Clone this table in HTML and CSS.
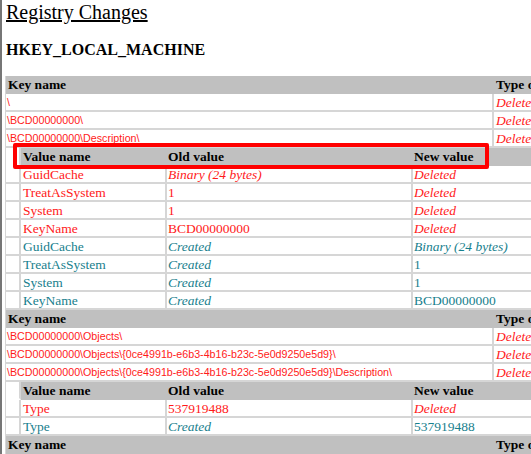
FILE: index.html
```html
<!DOCTYPE html>
<html>
<head>
<meta charset="utf-8">
<title>Registry Changes</title>
<link rel="stylesheet" href="styles.css">
</head>
<body>
<div class="page">
  <h1 class="title">Registry Changes</h1>
  <h2 class="hive">HKEY_LOCAL_MACHINE</h2>
  <table class="keys">
    <tr class="head"><th class="kname">Key name</th><th class="ktype">Type of change</th></tr>
    <tr class="key del"><td class="kname">\</td><td class="ktype">Deleted</td></tr>
    <tr class="key del"><td class="kname">\BCD00000000\</td><td class="ktype">Deleted</td></tr>
    <tr class="key del"><td class="kname">\BCD00000000\Description\</td><td class="ktype">Deleted</td></tr>
    <tr class="nest"><td colspan="2">
      <table class="vals">
        <tr class="vhead"><td class="pad"></td><th class="vname">Value name</th><th class="vold">Old value</th><th class="vnew">New value</th></tr>
        <tr class="del"><td class="pad"></td><td>GuidCache</td><td class="it">Binary (24 bytes)</td><td class="it">Deleted</td></tr>
        <tr class="del"><td class="pad"></td><td>TreatAsSystem</td><td>1</td><td class="it">Deleted</td></tr>
        <tr class="del"><td class="pad"></td><td>System</td><td>1</td><td class="it">Deleted</td></tr>
        <tr class="del"><td class="pad"></td><td>KeyName</td><td>BCD00000000</td><td class="it">Deleted</td></tr>
        <tr class="new"><td class="pad"></td><td>GuidCache</td><td class="it">Created</td><td class="it">Binary (24 bytes)</td></tr>
        <tr class="new"><td class="pad"></td><td>TreatAsSystem</td><td class="it">Created</td><td>1</td></tr>
        <tr class="new"><td class="pad"></td><td>System</td><td class="it">Created</td><td>1</td></tr>
        <tr class="new"><td class="pad"></td><td>KeyName</td><td class="it">Created</td><td>BCD00000000</td></tr>
      </table>
    </td></tr>
    <tr class="head"><th class="kname">Key name</th><th class="ktype">Type of change</th></tr>
    <tr class="key del"><td class="kname">\BCD00000000\Objects\</td><td class="ktype">Deleted</td></tr>
    <tr class="key del"><td class="kname">\BCD00000000\Objects\{0ce4991b-e6b3-4b16-b23c-5e0d9250e5d9}\</td><td class="ktype">Deleted</td></tr>
    <tr class="key del"><td class="kname">\BCD00000000\Objects\{0ce4991b-e6b3-4b16-b23c-5e0d9250e5d9}\Description\</td><td class="ktype">Deleted</td></tr>
    <tr class="nest"><td colspan="2">
      <table class="vals">
        <tr class="vhead"><td class="pad"></td><th class="vname">Value name</th><th class="vold">Old value</th><th class="vnew">New value</th></tr>
        <tr class="del"><td class="pad"></td><td>Type</td><td>537919488</td><td class="it">Deleted</td></tr>
        <tr class="new"><td class="pad"></td><td>Type</td><td class="it">Created</td><td>537919488</td></tr>
      </table>
    </td></tr>
    <tr class="head"><th class="kname">Key name</th><th class="ktype">Type of change</th></tr>
  </table>
  <div class="highlight"></div>
</div>
</body>
</html>
```

FILE: styles.css
```css
html, body {
  margin: 0;
  padding: 0;
  background: #ffffff;
}
body {
  border-left: 2px solid #767676;
  height: 454px;
  overflow: hidden;
  font-family: "Liberation Serif", "Times New Roman", serif;
  color: #000;
}
.page {
  position: relative;
  padding-left: 3px;
  width: 700px;
}
.title {
  margin: 0;
  padding: 1px 0 0 1px;
  font-size: 20px;
  line-height: 23px;
  font-weight: normal;
  text-decoration: underline;
}
.hive {
  margin: 17px 0 0 0;
  font-size: 16px;
  line-height: 18px;
  font-weight: bold;
  padding-left: 1px;
}
.keys {
  margin-top: 17px;
  border-collapse: separate;
  border-spacing: 0;
  table-layout: fixed;
  width: 660px;
  border-left: 1px solid #d6d6d6;
  font-size: 13.5px;
}
.keys th, .keys td {
  padding: 1px 0 0 2px;
  line-height: 15px;
  text-align: left;
  vertical-align: top;
  white-space: nowrap;
  overflow: hidden;
}
.keys .kname {
  width: 484px;
  border-right: 2px solid #d6d6d6;
  padding-left: 1px;
}
.head th {
  background: #c0c0c0;
  font-weight: bold;
  border-bottom: 2px solid #c0c0c0;
}
.head th.kname { border-right-color: #c0c0c0; padding-left: 2px; }
.key td {
  border-bottom: 2px solid #d6d6d6;
}
.key td.kname {
  font-family: "Liberation Sans", Arial, sans-serif;
  font-size: 10.7px;
}
.key td.ktype {
  font-style: italic;
}
.del td { color: #ff1a1a; }
.new td { color: #17808d; }
.it { font-style: italic; }

.keys .nest > td {
  padding: 0;
  border: none;
}
.vals {
  width: 100%;
  border-collapse: separate;
  border-spacing: 0;
  table-layout: fixed;
  font-size: 13.5px;
}
.vals th, .vals td {
  padding: 1px 0 0 2px;
  line-height: 15px;
  text-align: left;
  white-space: nowrap;
  overflow: hidden;
  border-bottom: 2px solid #d6d6d6;
  border-right: 2px solid #d6d6d6;
}
.vals td.pad {
  width: 13px;
  padding: 0;
}
.vals .vname { width: 142px; }
.vals .vold { width: 243px; padding-left: 1px; }
.vals .vnew { padding-left: 1px; }
.vals td:nth-child(3) { padding-left: 1px; }
.vals td:nth-child(4) { padding-left: 1px; }
.vhead th {
  background: #c0c0c0;
  font-weight: bold;
  border-bottom-color: #c0c0c0;
  border-right-color: #c0c0c0;
}
.vhead td.pad { border-bottom-color: #ffffff; }

.highlight {
  position: absolute;
  left: 11px;
  top: 143px;
  width: 476px;
  height: 26px;
  box-sizing: border-box;
  border: 4px solid #ff0000;
  border-radius: 2px;
}
```
